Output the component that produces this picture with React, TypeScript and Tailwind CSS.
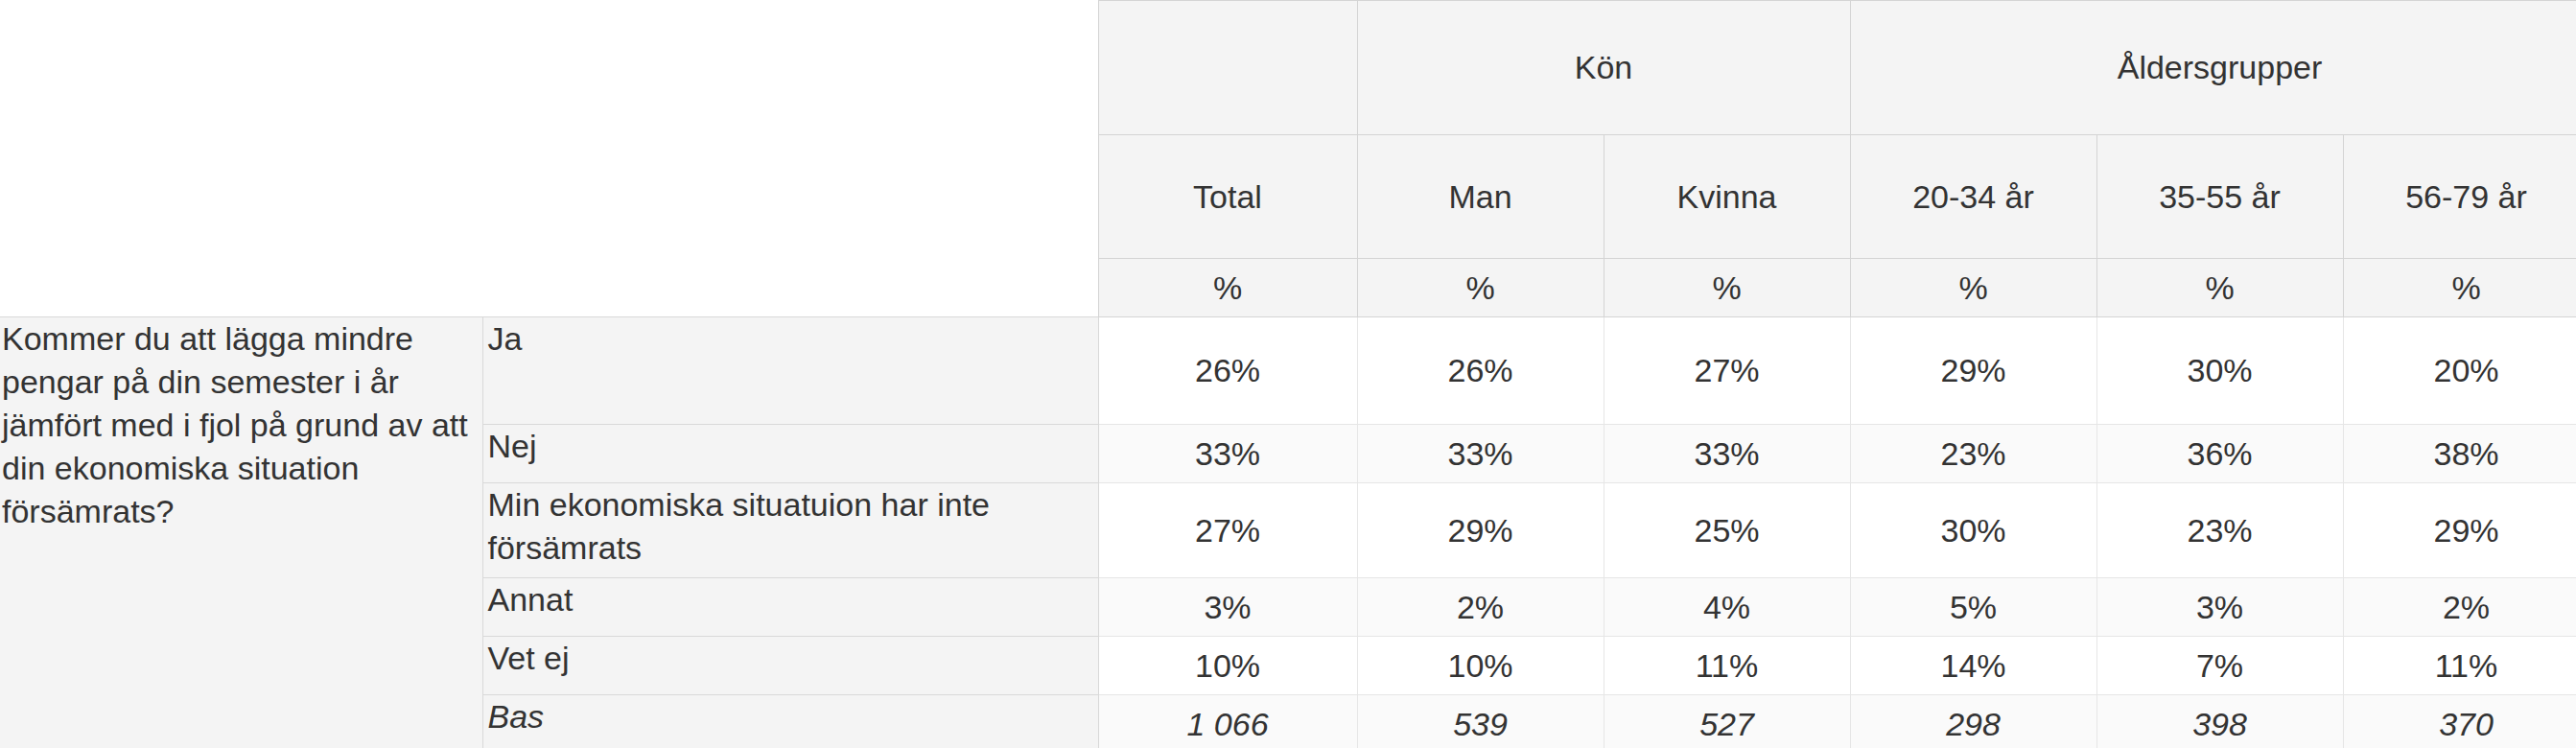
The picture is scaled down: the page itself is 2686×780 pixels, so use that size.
const answers = [
  { label: "Ja", values: ["26%", "26%", "27%", "29%", "30%", "20%"], h: "h-[112px]", alt: false },
  { label: "Nej", values: ["33%", "33%", "33%", "23%", "36%", "38%"], h: "h-[61px]", alt: true },
  {
    label: "Min ekonomiska situatuion har inte försämrats",
    values: ["27%", "29%", "25%", "30%", "23%", "29%"],
    h: "h-[99px]",
    alt: false,
  },
  { label: "Annat", values: ["3%", "2%", "4%", "5%", "3%", "2%"], h: "h-[61px]", alt: true },
  { label: "Vet ej", values: ["10%", "10%", "11%", "14%", "7%", "11%"], h: "h-[61px]", alt: false },
];

const bas = ["1 066", "539", "527", "298", "398", "370"];
const columns = ["Total", "Man", "Kvinna", "20-34 år", "35-55 år", "56-79 år"];

const headCell = "border border-[#d4d4d4] bg-[#f4f4f4] text-center align-middle font-normal";
const dataCell = "border border-[#e6e6e6] text-center align-middle py-[7px]";
const labelCell = "border border-[#d9d9d9] bg-[#f4f4f4] text-left align-top pl-[5px] pt-0";

export default function App() {
  return (
    <div className="w-full overflow-hidden bg-white">
      <table
        className="w-[2700px] table-fixed border-collapse text-[34px] leading-[45px] text-[#333333]"
        style={{ fontFamily: '"Liberation Sans", Arial, sans-serif' }}
      >
        <colgroup>
          <col className="w-[503px]" />
          <col className="w-[642px]" />
          <col className="w-[270px]" />
          <col className="w-[257px]" />
          <col className="w-[257px]" />
          <col className="w-[257px]" />
          <col className="w-[257px]" />
          <col className="w-[257px]" />
        </colgroup>
        <thead>
          <tr className="h-[140px]">
            <th colSpan={2} rowSpan={3} className="border-0 bg-white" />
            <th className={headCell} />
            <th colSpan={2} className={headCell}>
              Kön
            </th>
            <th colSpan={3} className={headCell}>
              Åldersgrupper
            </th>
          </tr>
          <tr className="h-[129px]">
            {columns.map((c) => (
              <th key={c} className={headCell}>
                {c}
              </th>
            ))}
          </tr>
          <tr className="h-[61px]">
            {columns.map((c) => (
              <th key={c} className={headCell}>
                %
              </th>
            ))}
          </tr>
        </thead>
        <tbody>
          {answers.map((a, i) => (
            <tr key={a.label} className={a.h}>
              {i === 0 ? (
                <td
                  rowSpan={6}
                  className="border border-l-0 border-[#d9d9d9] bg-[#f4f4f4] pl-[2px] pr-[4px] pt-0 text-left align-top"
                >
                  Kommer du att lägga mindre pengar på din semester i år jämfört med i fjol på grund av att
                  din ekonomiska situation försämrats?
                </td>
              ) : null}
              <td className={labelCell}>{a.label}</td>
              {a.values.map((v, j) => (
                <td key={j} className={`${dataCell} ${a.alt ? "bg-[#fafafa]" : "bg-white"}`}>
                  {v}
                </td>
              ))}
            </tr>
          ))}
          <tr className="h-[61px]">
            <td className={`${labelCell} italic`}>Bas</td>
            {bas.map((v, j) => (
              <td key={j} className={`${dataCell} bg-[#fafafa] italic`}>
                {v}
              </td>
            ))}
          </tr>
        </tbody>
      </table>
    </div>
  );
}
